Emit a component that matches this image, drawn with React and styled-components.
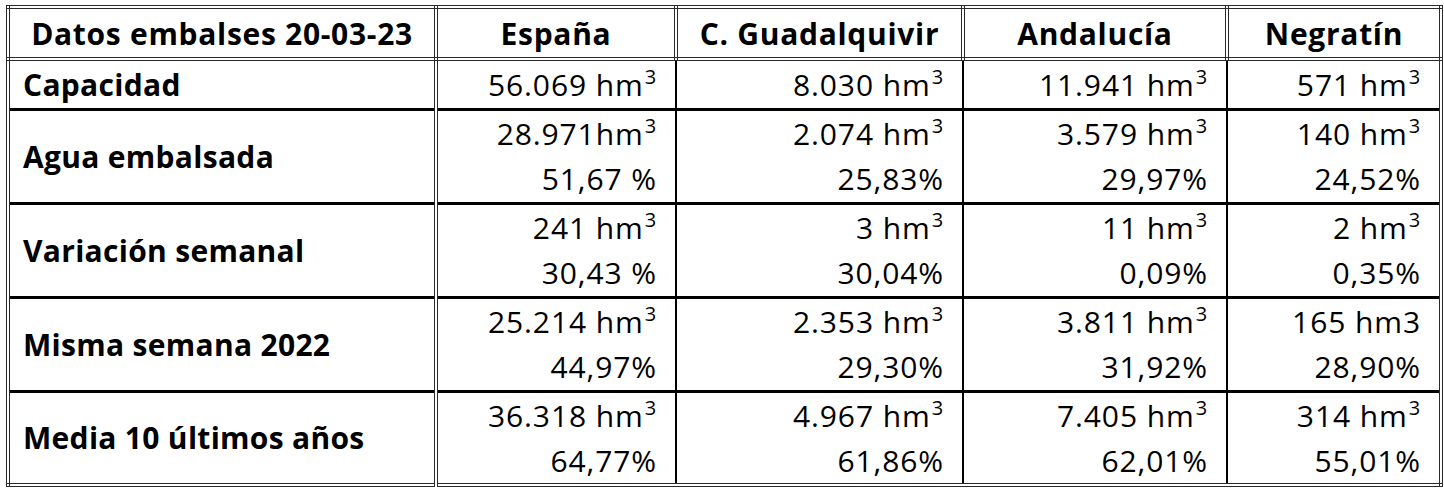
import React from 'react'
import styled, { createGlobalStyle } from 'styled-components'

const GlobalStyle = createGlobalStyle`
  body {
    margin: 0;
    background: #fff;
  }
  #root {
    padding: 5px 0 0 6px;
  }
`

const columns = ['España', 'C. Guadalquivir', 'Andalucía', 'Negratín']
const widths = [428, 240, 287, 264, 214]

const rows = [
  { label: 'Capacidad', values: [['56.069 hm³'], ['8.030 hm³'], ['11.941 hm³'], ['571 hm³']] },
  {
    label: 'Agua embalsada',
    values: [['28.971hm³', '51,67 %'], ['2.074 hm³', '25,83%'], ['3.579 hm³', '29,97%'], ['140 hm³', '24,52%']],
  },
  {
    label: 'Variación semanal',
    values: [['241 hm³', '30,43 %'], ['3 hm³', '30,04%'], ['11 hm³', '0,09%'], ['2 hm³', '0,35%']],
  },
  {
    label: 'Misma semana 2022',
    values: [['25.214 hm³', '44,97%'], ['2.353 hm³', '29,30%'], ['3.811 hm³', '31,92%'], ['165 hm3', '28,90%']],
  },
  {
    label: 'Media 10 últimos años',
    values: [['36.318 hm³', '64,77%'], ['4.967 hm³', '61,86%'], ['7.405 hm³', '62,01%'], ['314 hm³', '55,01%']],
  },
]

// "³" se pinta como superíndice pequeño, igual que en la hoja original
function Amount({ text }) {
  if (!text.includes('³')) return text
  const [base] = text.split('³')
  return (
    <>
      {base}
      <Sup>3</Sup>
    </>
  )
}

function App() {
  return (
    <>
      <GlobalStyle />
      <Table>
        <colgroup>
          {widths.map((w, i) => (
            <col key={i} style={{ width: w }} />
          ))}
        </colgroup>
        <thead>
          <tr>
            <HeadCell>Datos embalses 20-03-23</HeadCell>
            {columns.map((c) => (
              <HeadCell key={c}>{c}</HeadCell>
            ))}
          </tr>
        </thead>
        <tbody>
          {rows.map((row, ri) => (
            <BodyRow key={row.label} single={ri === 0}>
              <LabelCell>{row.label}</LabelCell>
              {row.values.map((lines, ci) => (
                <ValueCell key={ci}>
                  {lines.map((l, li) => (
                    <Line key={li}>
                      <Amount text={l} />
                    </Line>
                  ))}
                </ValueCell>
              ))}
            </BodyRow>
          ))}
        </tbody>
      </Table>
    </>
  )
}

export default App

const Table = styled.table`
  border-collapse: collapse;
  table-layout: fixed;
  width: 1433px;
  border: 4px double #2a2a2a;
  font-family: 'Open Sans', 'Liberation Sans', sans-serif;
  font-size: 30px;
  color: #000;
`

const HeadCell = styled.th`
  height: 48px;
  padding: 0;
  border: 4px double #2a2a2a;
  font-weight: 700;
  text-align: center;
  vertical-align: middle;
  letter-spacing: 0.7px;
  white-space: nowrap;
`

const BodyRow = styled.tr`
  height: ${(p) => (p.single ? '50px' : '94px')};
`

const LabelCell = styled.th`
  padding: 0 0 0 13px;
  border-top: 3px solid #000;
  border-bottom: 3px solid #000;
  border-right: 4px double #2a2a2a;
  font-weight: 700;
  text-align: left;
  vertical-align: middle;
  white-space: nowrap;
  letter-spacing: 0.3px;
`

const ValueCell = styled.td`
  padding: 0 18px 0 0;
  border: 2px solid #000;
  border-top-width: 3px;
  border-bottom-width: 3px;
  text-align: right;
  vertical-align: middle;
  white-space: nowrap;
  letter-spacing: 0.9px;
`

const Line = styled.div`
  line-height: 45px;
`

const Sup = styled.span`
  position: relative;
  top: -12px;
  font-size: 20px;
  line-height: 0;
  margin-left: 1px;
`
